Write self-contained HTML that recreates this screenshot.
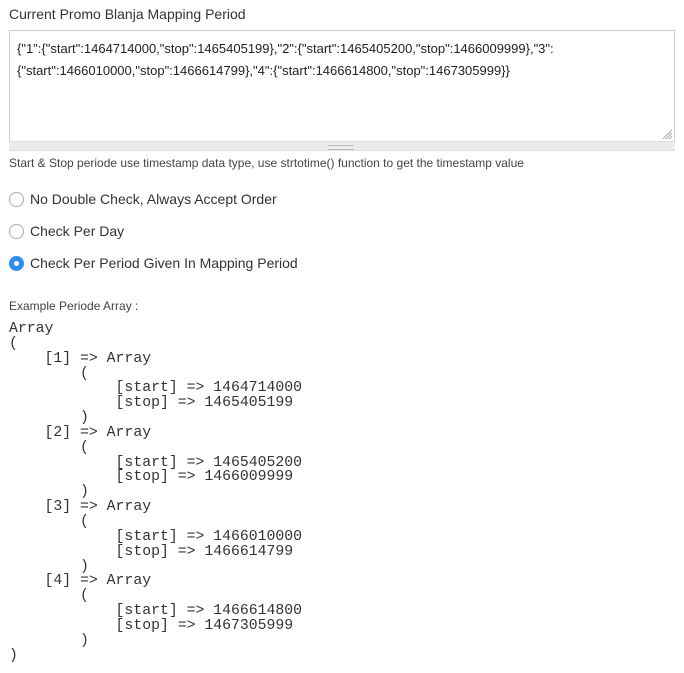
<!DOCTYPE html>
<html><head><style>
body{margin:0;background:#fff;font-family:"Liberation Sans",sans-serif;color:#333;width:684px;height:673px;overflow:hidden;position:relative}
.a{position:absolute;white-space:nowrap}
.ta{position:absolute;left:9px;top:30px;width:664px;height:111px;border:1px solid #ccc;border-bottom:none;background:#fff}
.bar{position:absolute;left:9px;top:141px;width:666px;height:10px;background:#ececec;border-top:1px solid #ddd;border-bottom:1px solid #ddd;box-sizing:border-box}
.r{position:absolute;left:9px;width:15px;height:15px;border-radius:50%;border:1px solid #aaa;box-sizing:border-box;background:#fff}
.r.on{background:#2f8ef3;border-color:#2f8ef3}
.r.on:after{content:"";position:absolute;left:4px;top:4px;width:5px;height:5px;border-radius:50%;background:#fff}
pre{position:absolute;left:9px;top:322px;margin:0;font-family:"Liberation Mono",monospace;font-size:14.8px;line-height:14.85px;color:#333}
</style></head><body>
<div class="a" style="left:9px;top:6px;font-size:14px">Current Promo Blanja Mapping Period</div>
<div class="ta"></div>
<div class="a" style="left:17px;top:38px;font-size:13px;line-height:22px;color:#222">{"1":{"start":1464714000,"stop":1465405199},"2":{"start":1465405200,"stop":1466009999},"3":<br>{"start":1466010000,"stop":1466614799},"4":{"start":1466614800,"stop":1467305999}}</div>
<div class="bar"></div>
<div style="position:absolute;left:328px;top:145px;width:26px;height:3px;border-top:1px solid #bbb;border-bottom:1px solid #bbb"></div>
<svg style="position:absolute;left:662px;top:129px" width="11" height="11"><path d="M10 1L1 10M10 4L4 10M10 7L7 10" stroke="#aaa" stroke-width="1"/></svg>
<div class="a" style="left:9px;top:156px;font-size:12px;color:#444">Start &amp; Stop periode use timestamp data type, use strtotime() function to get the timestamp value</div>
<div class="r" style="top:192px"></div><div class="a" style="left:30px;top:191px;font-size:14px">No Double Check, Always Accept Order</div>
<div class="r" style="top:224px"></div><div class="a" style="left:30px;top:223px;font-size:14px">Check Per Day</div>
<div class="r on" style="top:256px"></div><div class="a" style="left:30px;top:255px;font-size:14px">Check Per Period Given In Mapping Period</div>
<div class="a" style="left:9px;top:299px;font-size:12px;color:#444">Example Periode Array :</div>
<pre>Array
(
    [1] =&gt; Array
        (
            [start] =&gt; 1464714000
            [stop] =&gt; 1465405199
        )
    [2] =&gt; Array
        (
            [start] =&gt; 1465405200
            [stop] =&gt; 1466009999
        )
    [3] =&gt; Array
        (
            [start] =&gt; 1466010000
            [stop] =&gt; 1466614799
        )
    [4] =&gt; Array
        (
            [start] =&gt; 1466614800
            [stop] =&gt; 1467305999
        )
)</pre>
</body></html>
